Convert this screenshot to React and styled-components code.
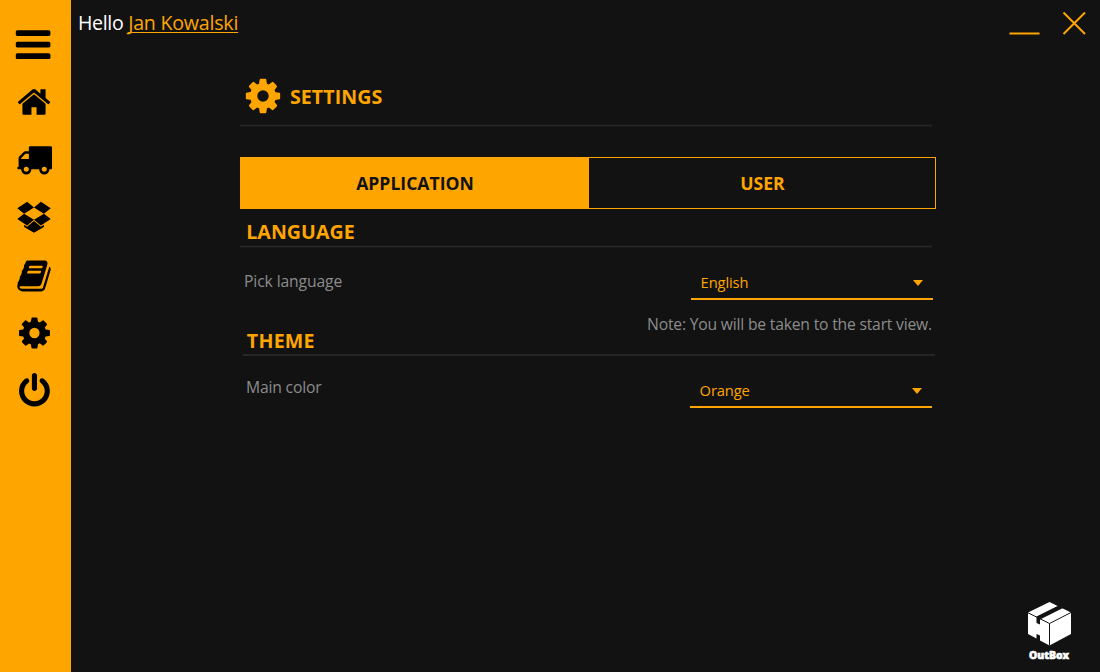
import React from 'react';
import styled, { createGlobalStyle } from 'styled-components';

const ORANGE = '#ffa500';
const BLACK = '#121212';

const GlobalStyle = createGlobalStyle`
  * { box-sizing: border-box; }
  body { margin: 0; background: ${BLACK}; font-family: 'Open Sans', 'Noto Sans', sans-serif; }
  button { font-family: inherit; background: none; border: 0; padding: 0; }
`;

const Window = styled.div`
  display: flex;
  height: 672px;
  overflow: hidden;
  background: ${BLACK};
`;

const Sidebar = styled.nav`
  display: flex;
  flex-direction: column;
  align-items: flex-start;
  width: 71px;
  padding: 24px 0 0 12px;
  background: ${ORANGE};
`;

const NavButton = styled.button`
  display: block;
  height: ${(p) => p.$size || 36}px;
  margin-top: ${(p) => p.$gap || 0}px;
  margin-left: ${(p) => p.$shift ?? 4}px;
  color: #000;
`;

const Glyph = styled.svg`
  display: block;
  width: ${(p) => p.$size || 36}px;
  height: ${(p) => p.$size || 36}px;
  fill: currentColor;
`;

const Main = styled.main`
  display: flex;
  flex: 1;
  flex-direction: column;
`;

const TopBar = styled.header`
  display: flex;
  justify-content: space-between;
  height: 75px;
  padding: 8px 14px 0 7px;
`;

const Greeting = styled.div`
  color: #fff;
  font-size: 19.6px;
  line-height: 29px;
  letter-spacing: -0.35px;
`;

const UserLink = styled.a`
  letter-spacing: -0.22px;
  color: ${ORANGE};
  text-decoration: underline;
  text-decoration-thickness: 1px;
  text-underline-offset: 2px;
  text-decoration-skip-ink: none;
`;

const WindowControls = styled.div`
  display: flex;
  gap: 22px;
  padding-top: 4px;
  color: ${ORANGE};
`;

const ControlIcon = styled.svg`
  width: ${(p) => p.$width}px;
  height: 24px;
  fill: none;
  stroke: currentColor;
  stroke-width: 2;
`;

const Content = styled.section`
  display: flex;
  flex-direction: column;
  width: 696px;
  margin-left: 169px;
`;

const PageTitle = styled.h1`
  display: flex;
  align-items: flex-start;
  gap: 7px;
  height: 49px;
  margin: 0;
  padding: 1px 0 0 3px;
  color: ${ORANGE};
  font-size: 19.6px;
  font-weight: 700;
  line-height: 42px;
  letter-spacing: 0.05px;
`;

const Divider = styled.hr`
  width: 692px;
  height: 3px;
  margin: 0;
  border: solid #1a1a1a;
  border-width: 1px 0;
  background: #262626;
`;

const ThinDivider = styled(Divider)`
  height: 2px;
  margin-left: 3px;
  border: 0;
`;

const Tabs = styled.div`
  display: grid;
  grid-template-columns: 349px 347px;
  height: 52px;
  margin-top: 30px;
`;

const Tab = styled.button`
  border: 1px solid ${ORANGE};
  border-left-width: ${(p) => (p.$active ? 1 : 0)}px;
  background: ${(p) => (p.$active ? ORANGE : 'transparent')};
  color: ${(p) => (p.$active ? BLACK : ORANGE)};
  padding-left: 1px;
  font-size: 17.6px;
  font-weight: 700;
`;

const SectionTitle = styled.h2`
  height: ${(p) => p.$height}px;
  margin: 0;
  padding: ${(p) => p.$top || 0}px 0 0 ${(p) => p.$left}px;
  color: ${ORANGE};
  font-size: 19.6px;
  font-weight: 700;
  line-height: 17px;
  letter-spacing: ${(p) => p.$spacing}px;
`;

const Field = styled.div`
  display: flex;
  justify-content: space-between;
  height: 36px;
  margin-top: 16px;
  padding: 0 ${(p) => p.$right}px 0 ${(p) => p.$left}px;
`;

const Label = styled.label`
  color: #8c8c8c;
  font-size: 15.7px;
  line-height: ${(p) => p.$line}px;
  letter-spacing: ${(p) => p.$spacing}px;
`;

const Select = styled.div`
  display: flex;
  justify-content: space-between;
  width: 242px;
  padding: 0 10px 0 9.6px;
  border-bottom: 2px solid ${ORANGE};
  color: ${ORANGE};
  font-size: 14.7px;
  line-height: 37px;
  letter-spacing: -0.12px;
`;

const Caret = styled.span`
  align-self: center;
  margin-top: 4px;
  border: solid transparent;
  border-width: 6px 5.5px 0;
  border-top-color: ${ORANGE};
`;

const Note = styled.p`
  margin: 16px 4px 0 0;
  color: #8c8c8c;
  font-size: 15.7px;
  line-height: 16px;
  letter-spacing: -0.2px;
  text-align: right;
`;

const Brand = styled.footer`
  display: flex;
  flex-direction: column;
  align-items: center;
  align-self: flex-end;
  width: 60px;
  margin: auto 21px 9px 0;
  color: #fff;
`;

const BoxLogo = styled.svg`
  width: 44px;
  height: 44px;
`;

const BrandName = styled.span`
  font-size: 10.4px;
  font-weight: 800;
  line-height: 16px;
  margin-top: 1px;
  -webkit-text-stroke: 0.6px #fff;
`;

const PATHS = {
  bars: 'M1664 1344v128q0 26-19 45t-45 19h-1408q-26 0-45-19t-19-45v-128q0-26 19-45t45-19h1408q26 0 45 19t19 45zm0-512v128q0 26-19 45t-45 19h-1408q-26 0-45-19t-19-45v-128q0-26 19-45t45-19h1408q26 0 45 19t19 45zm0-512v128q0 26-19 45t-45 19h-1408q-26 0-45-19t-19-45v-128q0-26 19-45t45-19h1408q26 0 45 19t19 45z',
  home: 'M1472 992v480q0 26-19 45t-45 19h-384v-384h-256v384h-384q-26 0-45-19t-19-45v-480q0-1 .5-3t.5-3l575-474 575 474q1 2 1 6zm223-69l-62 74q-8 9-21 11h-3q-13 0-21-7l-692-577-692 577q-12 8-24 7-13-2-21-11l-62-74q-8-10-7-23.5t11-21.5l719-599q32-26 76-26t76 26l244 204v-195q0-14 9-23t23-9h192q14 0 23 9t9 23v408l219 182q10 8 11 21.5t-7 23.5z',
  truck: 'M640 1408q0-52-38-90t-90-38-90 38-38 90 38 90 90 38 90-38 38-90zm-384-512h384v-256h-158q-13 0-22 9l-195 195q-9 9-9 22v30zm1280 512q0-52-38-90t-90-38-90 38-38 90 38 90 90 38 90-38 38-90zm256-1088v1024q0 15-4 26.5t-13.5 18.5-16.5 11.5-23.5 6-22.5 2-25.5 0-22.5-.5q0 106-75 181t-181 75-181-75-75-181h-384q0 106-75 181t-181 75-181-75-75-181h-64q-3 0-22.5.5t-25.5 0-22.5-2-23.5-6-16.5-11.5-13.5-18.5-4-26.5q0-26 19-45t45-19v-320q0-8-.5-35t0-38 2.5-34.5 6.5-37 14-30.5 22.5-30l198-198q19-19 50.5-32t58.5-13h160v-192q0-26 19-45t45-19h1024q26 0 45 19t19 45z',
  dropbox: 'M402 829l494 305-342 285-490-319zM1388 1384v108l-490 293v1l-1-1-1 1v-1l-489-293v-108l147 96 342-284v-2l1 1 1-1v2l343 284zM554 240l342 285-494 304-338-270zM1390 829l338 271-490 319-342-285zM1238 240l490 319-338 270-494-304z',
  book: 'M1703 478q40 57 18 129l-275 906q-19 64-76.5 107.5t-122.5 43.5h-923q-77 0-148.5-53.5t-99.5-131.5q-24-67-2-127 0-4 3-27t4-37q1-8-3-21.5t-3-19.5q2-11 8-21t16.5-23.5 16.5-23.5q23-38 45-91.5t30-91.5q3-10 .5-30t-.5-28q3-11 17-28t17-23q21-36 42-92t25-90q1-9-2.5-32t.5-28q4-13 22-30.5t22-22.5q19-26 42.5-84.5t27.5-96.5q1-8-3-25.5t-2-26.5q2-8 9-18t18-23 17-21q8-12 16.5-30.5t15-35 16-36 19.5-32 26.5-23.5 36-11.5 47.5 5.5l-1 3q38-9 51-9h761q74 0 114 56t18 130l-274 906q-36 119-71.5 153.5t-128.5 34.5h-869q-27 0-38 15-11 16-1 43 24 70 144 70h923q29 0 56-15.5t35-41.5l300-987q7-22 5-57 38 15 59 43zm-1064 2q-4 13 2 22.5t20 9.5h608q13 0 25.5-9.5t16.5-22.5l21-64q4-13-2-22.5t-20-9.5h-608q-13 0-25.5 9.5t-16.5 22.5zm-83 256q-4 13 2 22.5t20 9.5h608q13 0 25.5-9.5t16.5-22.5l21-64q4-13-2-22.5t-20-9.5h-608q-13 0-25.5 9.5t-16.5 22.5z',
  cog: 'M1152 896q0-106-75-181t-181-75-181 75-75 181 75 181 181 75 181-75 75-181zm512-109v222q0 12-8 23t-20 13l-185 28q-19 54-39 91 35 50 107 138 10 12 10 25t-9 23q-27 37-99 108t-94 71q-12 0-26-9l-138-108q-44 23-91 38-16 136-29 186-7 28-36 28h-222q-14 0-24.5-8.5t-11.5-21.5l-28-184q-49-16-90-37l-141 107q-10 9-25 9-14 0-25-11-126-114-165-168-7-10-7-23 0-12 8-23 15-21 51-66.5t54-70.5q-27-50-41-99l-183-27q-13-2-21-12.5t-8-23.5v-222q0-12 8-23t19-13l186-28q14-46 39-92-40-57-107-138-10-12-10-24 0-10 9-23 26-36 98.5-107.5t94.5-71.5q13 0 26 10l138 107q44-23 91-38 16-136 29-186 7-28 36-28h222q14 0 24.5 8.5t11.5 21.5l28 184q49 16 90 37l142-107q9-9 24-9 13 0 25 10 129 119 165 170 7 8 7 22 0 12-8 23-15 21-51 66.5t-54 70.5q26 50 41 98l183 28q13 2 21 12.5t8 23.5z',
  power: 'M1664 896q0 156-61 298t-164 245-245 164-298 61-298-61-245-164-164-245-61-298q0-182 80.5-343t226.5-270q43-32 95.5-25t83.5 50q32 42 24.5 94.5t-49.5 84.5q-98 74-151.5 181t-53.5 228q0 104 40.5 198.5t109.5 163.5 163.5 109.5 198.5 40.5 198.5-40.5 163.5-109.5 109.5-163.5 40.5-198.5q0-121-53.5-228t-151.5-181q-42-32-49.5-84.5t24.5-94.5q31-43 84-50t95 25q146 109 226.5 270t80.5 343zm-640-768v640q0 52-38 90t-90 38-90-38-38-90v-640q0-52 38-90t90-38 90 38 38 90z',
};

const NAV = [
  { name: 'bars', size: 40.4, shift: -0.3, offset: '40 20' },
  { name: 'home', gap: 19.6, shift: 3.8 },
  { name: 'truck', gap: 21, shift: 4 },
  { name: 'dropbox', gap: 20, shift: 3.8 },
  { name: 'book', gap: 24.9, shift: 4 },
  { name: 'cog', gap: 21.6, offset: '22 0' },
  { name: 'power', gap: 21.3, offset: '22 0' },
];

function Icon({ name, size, offset = '0 0' }) {
  return (
    <Glyph $size={size} viewBox="0 0 1792 1792">
      <path transform={`translate(${offset})`} d={PATHS[name]} />
    </Glyph>
  );
}

export default function App() {
  return (
    <Window>
      <GlobalStyle />
      <Sidebar>
        {NAV.map(({ name, size, gap, shift, offset }) => (
          <NavButton key={name} aria-label={name} $size={size} $gap={gap} $shift={shift}>
            <Icon name={name} size={size} offset={offset} />
          </NavButton>
        ))}
      </Sidebar>
      <Main>
        <TopBar>
          <Greeting>
            Hello <UserLink>Jan Kowalski</UserLink>
          </Greeting>
          <WindowControls>
            <ControlIcon $width={31} viewBox="0 0 31 24">
              <path d="M.5 21.5h30" />
            </ControlIcon>
            <ControlIcon $width={24} viewBox="0 0 24 24">
              <path d="M1.5 .5l21.5 21.5M23 .5L1.5 22" />
            </ControlIcon>
          </WindowControls>
        </TopBar>
        <Content>
          <PageTitle>
            <Icon name="cog" size={40} />
            SETTINGS
          </PageTitle>
          <Divider />
          <Tabs>
            <Tab $active>APPLICATION</Tab>
            <Tab>USER</Tab>
          </Tabs>
          <SectionTitle $height={36} $top={14} $left={6.2} $spacing={0.05}>LANGUAGE</SectionTitle>
          <Divider />
          <Field $left={4} $right={3}>
            <Label $line={35} $spacing={-0.12}>Pick language</Label>
            <Select>
              English
              <Caret />
            </Select>
          </Field>
          <Note>Note: You will be taken to the start view.</Note>
          <SectionTitle $height={22} $left={6.8} $spacing={0.25}>THEME</SectionTitle>
          <ThinDivider />
          <Field $left={6} $right={4}>
            <Label $line={31} $spacing={-0.18}>Main color</Label>
            <Select>
              Orange
              <Caret />
            </Select>
          </Field>
        </Content>
        <Brand>
          <BoxLogo viewBox="0 0 44 44">
            <path fill="#fff" d="M22.5 0L44 10.5V32L22.5 43.5L13 38.5V33.5L9.5 32V36.5L1 32V10.5z" />
            <path fill="none" stroke="#121212" strokeWidth="1" d="M0.5 10.5L22.5 21.5L44 10.5M22.5 21.5V43.5" />
            <path fill="#121212" d="M31.5 3.5L9.5 14.5V21L13 22.5V17.5L36 6z" />
          </BoxLogo>
          <BrandName>OutBox</BrandName>
        </Brand>
      </Main>
    </Window>
  );
}
